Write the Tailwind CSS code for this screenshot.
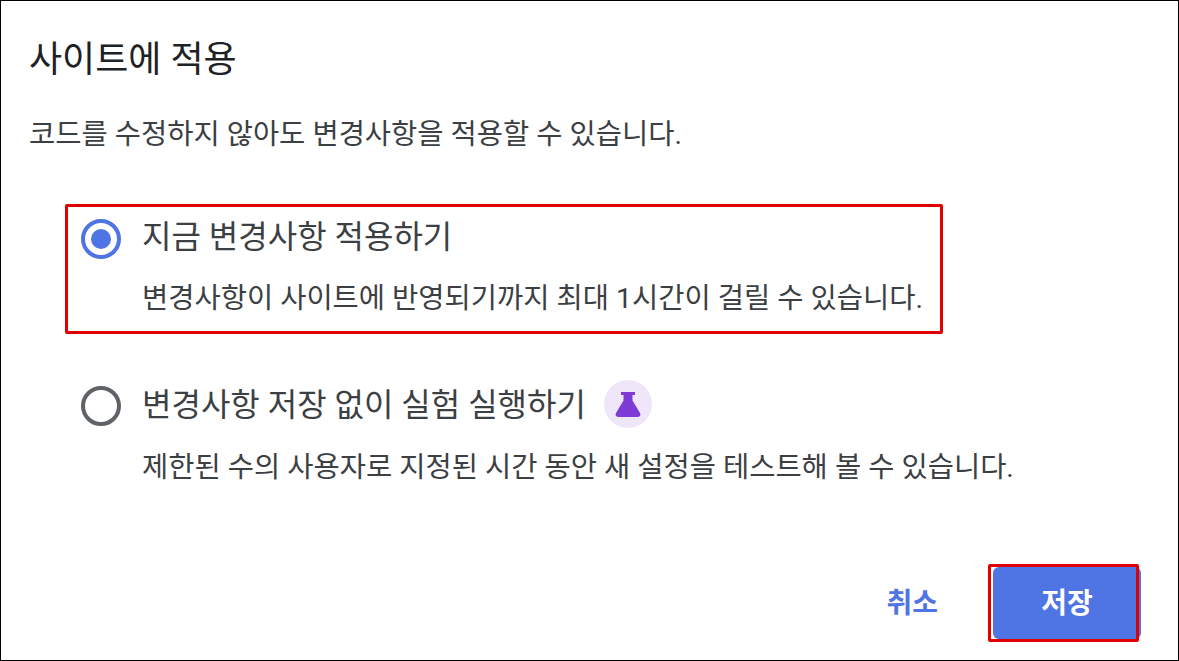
<!DOCTYPE html>
<html lang="ko">
  <head>
    <meta charset="UTF-8" />
    <title>사이트에 적용</title>
    <script src="https://cdn.jsdelivr.net/npm/@tailwindcss/browser@4"></script>
  </head>
  <body class="m-0">
    <main class="w-[1179px] h-[661px] overflow-hidden bg-white border border-black text-[#3c4043] font-['Roboto','Noto_Sans_CJK_KR',sans-serif]">
      <h2 class="pl-[28px] pt-[38px] text-[36px] leading-[42px] text-[#202124]">사이트에 적용</h2>
      <p class="pl-[28px] mt-[36px] text-[28.5px] leading-[36px]">코드를 수정하지 않아도 변경사항을 적용할 수 있습니다.</p>

      <!-- 옵션 -->
      <div class="mt-[51px] ml-[64px] w-[878px] h-[130px] border-[3px] border-[#e00000] rounded-[2px] pl-[13px] pt-[6px]">
        <div class="flex items-start gap-[21px]">
          <span class="mt-[6px] w-[40px] h-[40px] rounded-full border-[4px] border-[#4f74e3] flex items-center justify-center">
            <span class="w-[20px] h-[20px] rounded-full bg-[#4f74e3]"></span>
          </span>
          <span class="mt-[3px] text-[32px] leading-[42px]">지금 변경사항 적용하기</span>
        </div>
        <p class="ml-[61px] mt-[22px] text-[28.5px] leading-[36px]">변경사항이 사이트에 반영되기까지 최대 1시간이 걸릴 수 있습니다.</p>
      </div>

      <div class="ml-[80px] mt-[46px]">
        <div class="flex items-start">
          <span class="mt-[6px] w-[40px] h-[40px] rounded-full border-[4px] border-[#5f6368]"></span>
          <span class="mt-[4px] ml-[21px] text-[32px] leading-[42px]">변경사항 저장 없이 실험 실행하기</span>
          <span class="ml-[18px] w-[48px] h-[48px] rounded-full bg-[#f0e6f9] flex items-center justify-center">
            <svg width="26" height="25" viewBox="0 0 26 25" fill="#7f3bd6"><path d="M6 0h14v3h-2.500v5.500L25 21c1.100 2-.2 4-2.300 4H3.300C1.200 25-.1 23 1 21L8.500 8.500V3H6z"/></svg>
          </span>
        </div>
        <p class="ml-[61px] mt-[22px] text-[28.5px] leading-[36px]">제한된 수의 사용자로 지정된 시간 동안 새 설정을 테스트해 볼 수 있습니다.</p>
      </div>

      <!-- 버튼 -->
      <div class="mt-[80px] pr-[37px] flex justify-end items-center gap-[55px]">
        <button class="text-[28px] font-bold text-[#4f74e3] leading-[72px] mt-[2px]">취소</button>
        <button class="relative w-[148px] h-[72px] pt-[2px] rounded-[6px] bg-[#4f74e3] text-white text-[28px] font-bold">
          저장
          <span class="absolute -left-[5px] -top-[3px] w-[151px] h-[78px] border-[3px] border-[#e00000] rounded-[2px]"></span>
        </button>
      </div>
    </main>
  </body>
</html>
